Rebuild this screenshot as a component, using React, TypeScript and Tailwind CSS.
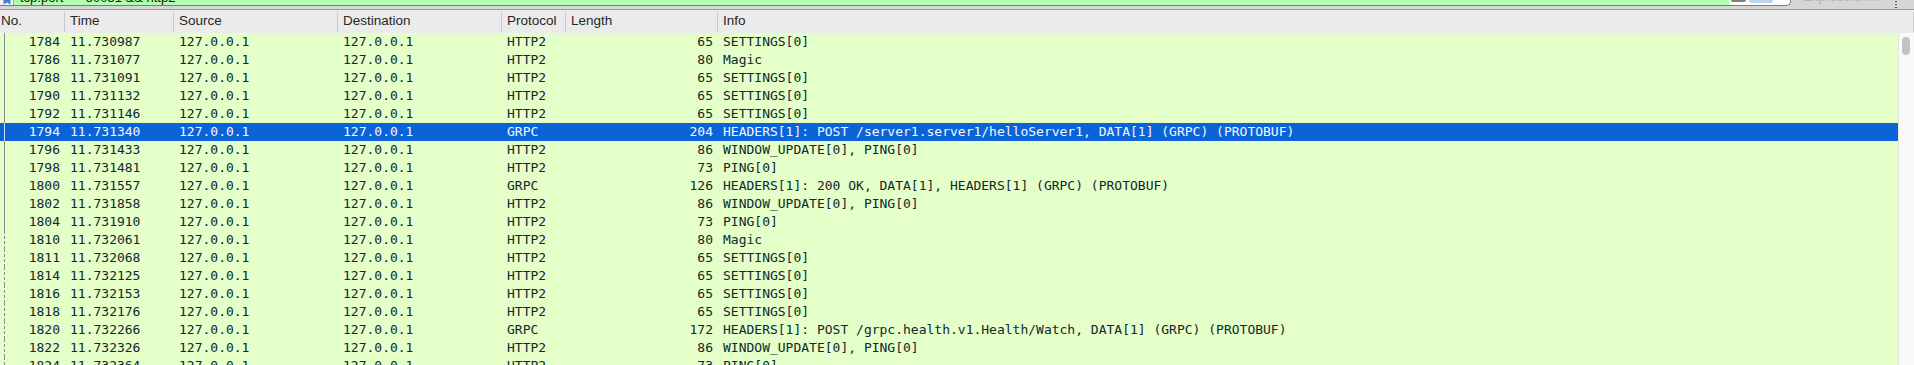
import React from "react";

type Packet = {
  no: number;
  time: string;
  proto: string;
  len: number;
  info: string;
};

const packets: Packet[] = [
  { no: 1784, time: "11.730987", proto: "HTTP2", len: 65, info: "SETTINGS[0]" },
  { no: 1786, time: "11.731077", proto: "HTTP2", len: 80, info: "Magic" },
  { no: 1788, time: "11.731091", proto: "HTTP2", len: 65, info: "SETTINGS[0]" },
  { no: 1790, time: "11.731132", proto: "HTTP2", len: 65, info: "SETTINGS[0]" },
  { no: 1792, time: "11.731146", proto: "HTTP2", len: 65, info: "SETTINGS[0]" },
  { no: 1794, time: "11.731340", proto: "GRPC", len: 204, info: "HEADERS[1]: POST /server1.server1/helloServer1, DATA[1] (GRPC) (PROTOBUF)" },
  { no: 1796, time: "11.731433", proto: "HTTP2", len: 86, info: "WINDOW_UPDATE[0], PING[0]" },
  { no: 1798, time: "11.731481", proto: "HTTP2", len: 73, info: "PING[0]" },
  { no: 1800, time: "11.731557", proto: "GRPC", len: 126, info: "HEADERS[1]: 200 OK, DATA[1], HEADERS[1] (GRPC) (PROTOBUF)" },
  { no: 1802, time: "11.731858", proto: "HTTP2", len: 86, info: "WINDOW_UPDATE[0], PING[0]" },
  { no: 1804, time: "11.731910", proto: "HTTP2", len: 73, info: "PING[0]" },
  { no: 1810, time: "11.732061", proto: "HTTP2", len: 80, info: "Magic" },
  { no: 1811, time: "11.732068", proto: "HTTP2", len: 65, info: "SETTINGS[0]" },
  { no: 1814, time: "11.732125", proto: "HTTP2", len: 65, info: "SETTINGS[0]" },
  { no: 1816, time: "11.732153", proto: "HTTP2", len: 65, info: "SETTINGS[0]" },
  { no: 1818, time: "11.732176", proto: "HTTP2", len: 65, info: "SETTINGS[0]" },
  { no: 1820, time: "11.732266", proto: "GRPC", len: 172, info: "HEADERS[1]: POST /grpc.health.v1.Health/Watch, DATA[1] (GRPC) (PROTOBUF)" },
  { no: 1822, time: "11.732326", proto: "HTTP2", len: 86, info: "WINDOW_UPDATE[0], PING[0]" },
  { no: 1824, time: "11.732364", proto: "HTTP2", len: 73, info: "PING[0]" },
];

const SELECTED = 1794;
const LAST_IN_CONVERSATION = 1804;

const columns = ["No.", "Time", "Source", "Destination", "Protocol", "Length", "Info"];

function FilterBar() {
  return (
    <div className="h-[10px] bg-[#d6d6d6] border-b border-[#9b9b9b] flex items-start">
      {/* display filter, mostly scrolled out of view */}
      <div className="w-[1791px] h-[6px] flex border-b border-r border-[#7c7c7c] rounded-br-[5px] overflow-hidden bg-white">
        <div className="w-[14px] shrink-0 bg-[#f4f4f4] border-r border-[#a4a4a4] flex justify-center">
          <svg width="8" height="5" viewBox="0 0 8 5">
            <path d="M0.5 0 L0.5 4.5 L4 2.5 L7.5 4.5 L7.5 0 Z" fill="#3b82d6" />
          </svg>
        </div>
        <div className="flex-1 bg-[#afffaf] overflow-hidden">
          <div className="mt-[-10px] pl-[6px] font-['Liberation_Sans'] text-[13px] leading-[16px] text-[#1a1a1a] whitespace-nowrap">
            tcp.port == 50051 &amp;&amp; http2
          </div>
        </div>
        <div className="w-[61px] shrink-0 flex items-start gap-[3px] pl-[2px]">
          <div className="w-[15px] h-[2px] bg-[#7d7d7d] rounded-b-[3px]" />
          <div className="w-[24px] h-[3px] bg-[#bdd3ee] rounded-b-[3px]" />
        </div>
      </div>
      <div className="flex-1 flex items-start overflow-hidden h-[9px]">
        <div className="ml-[12px] mt-[-11px] font-['Liberation_Sans'] text-[13px] leading-[16px] text-[#b4b4b4] whitespace-nowrap">
          Expression…
        </div>
        <div className="ml-[15px] flex flex-col gap-[2px] pt-[1px]">
          <span className="w-[2px] h-[1px] bg-[#555]" />
          <span className="w-[2px] h-[1px] bg-[#555]" />
          <span className="w-[2px] h-[1px] bg-[#555]" />
        </div>
      </div>
    </div>
  );
}

function Header() {
  return (
    <div className="h-[23px] bg-[#ebebeb] grid grid-cols-[65px_109px_164px_164px_64px_152px_1fr] font-['Liberation_Sans'] text-[13.5px] text-[#262626]">
      {columns.map((c, i) => (
        <div key={c} className="flex items-center">
          <span className={`flex-1 whitespace-nowrap ${i === 0 ? "pl-px" : "pl-[5px]"}`}>{c}</span>
          <span className="w-px h-[20px] bg-[#c9c9c9]" />
        </div>
      ))}
    </div>
  );
}

function Row({ p }: { p: Packet }) {
  const selected = p.no === SELECTED;
  const dashed = p.no > LAST_IN_CONVERSATION;
  return (
    <div
      className={`h-[18px] leading-[18px] grid grid-cols-[65px_109px_164px_164px_64px_152px_1fr] whitespace-nowrap ${
        selected ? "bg-[#0b63d8] text-[#f4f7fc]" : "bg-[#e4ffc7] text-[#12272e]"
      }`}
    >
      <div className="flex">
        <span
          className={`ml-[4px] w-0 border-l ${dashed ? "border-dashed" : "border-solid"} ${
            selected ? "border-[#cfe0f7]" : "border-[#8a8a8a]"
          }`}
        />
        <span className="flex-1 text-right pr-[5px]">{p.no}</span>
      </div>
      <div className="pl-[5px]">{p.time}</div>
      <div className="pl-[5px]">127.0.0.1</div>
      <div className="pl-[5px]">127.0.0.1</div>
      <div className="pl-[5px]">{p.proto}</div>
      <div className="text-right pr-[5px]">{p.len}</div>
      <div className="pl-[5px] overflow-hidden">{p.info}</div>
    </div>
  );
}

export default function App() {
  return (
    <div className="w-[1914px] h-[365px] overflow-hidden flex flex-col bg-white">
      <FilterBar />
      <Header />
      <div className="flex-1 flex min-h-0">
        <div className="flex-1 overflow-hidden bg-[#e4ffc7] font-['DejaVu_Sans_Mono'] text-[13px] border-r border-[#e6e6e6]">
          {packets.map((p) => (
            <Row key={p.no} p={p} />
          ))}
        </div>
        <div className="w-[15px] bg-[#f9f9f9] pt-[4px] pl-[3px]">
          <div className="w-[8px] h-[18px] rounded-full bg-[#c3c3c3]" />
        </div>
      </div>
    </div>
  );
}
